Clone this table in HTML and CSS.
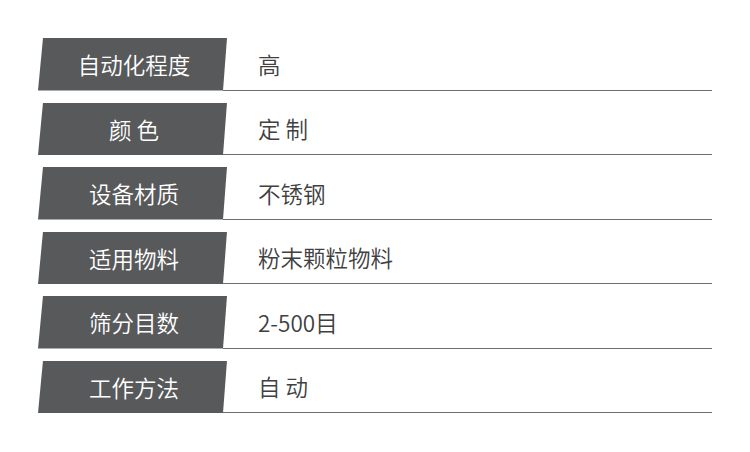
FILE: index.html
```html
<!DOCTYPE html>
<html lang="zh">
<head>
<meta charset="utf-8">
<link rel="stylesheet" href="styles.css">
</head>
<body>
<div class="table">
  <div class="row"><div class="label">自动化程度</div><div class="value">高</div></div>
  <div class="row"><div class="label">颜 色</div><div class="value">定 制</div></div>
  <div class="row"><div class="label">设备材质</div><div class="value">不锈钢</div></div>
  <div class="row"><div class="label">适用物料</div><div class="value">粉末颗粒物料</div></div>
  <div class="row"><div class="label">筛分目数</div><div class="value">2-500目</div></div>
  <div class="row"><div class="label">工作方法</div><div class="value">自 动</div></div>
</div>
</body>
</html>
```
FILE: styles.css
```css
html, body {
  margin: 0;
  padding: 0;
  background: #ffffff;
}
body {
  width: 750px;
  height: 452px;
  overflow: hidden;
  font-family: "Noto Sans CJK SC", "Noto Sans", sans-serif;
}
.table {
  display: flex;
  flex-direction: column;
  gap: 12px;
  padding: 38px 38px 0 38px;
}
.row {
  display: flex;
  height: 52.5px;
  width: 674px;
}
.label {
  flex: 0 0 189px;
  background: #58595b;
  color: #ffffff;
  font-size: 22.5px;
  font-weight: 350;
  display: flex;
  align-items: center;
  justify-content: center;
  padding-left: 3px;
  box-sizing: border-box;
  clip-path: polygon(5px 0, 100% 0, calc(100% - 4px) 100%, 0 100%);
  position: relative;
  z-index: 1;
}
.value {
  flex: 1;
  margin-left: -4px;
  padding-left: 35px;
  display: flex;
  align-items: center;
  font-size: 22.5px;
  font-weight: 350;
  color: #404040;
  border-bottom: 1.5px solid #6f6f6f;
  box-sizing: border-box;
}
```
